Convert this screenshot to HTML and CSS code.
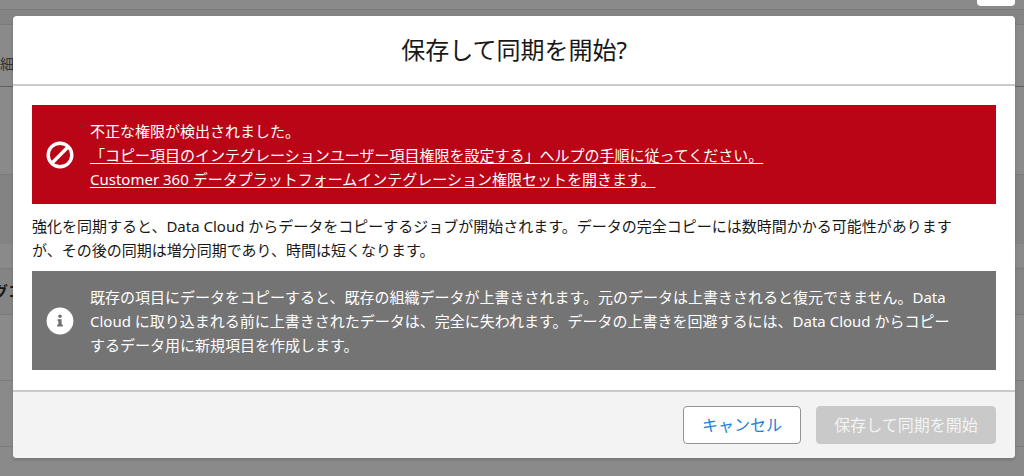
FILE: index.html
```
<!DOCTYPE html>
<html lang="ja">
<head>
<meta charset="utf-8">
<meta name="viewport" content="width=device-width, initial-scale=1">
<title>保存して同期を開始</title>
<link rel="stylesheet" href="styles.css">
</head>
<body>
<div class="stage">
  <div class="page" aria-hidden="true">
    <div class="row row-toolbar"><span class="page-button"></span></div>
    <div class="row row-gap"></div>
    <div class="row row-tabs">細</div>
    <div class="row row-panel"></div>
    <div class="row row-band"></div>
    <div class="row row-space"></div>
    <div class="row row-head">グコ</div>
    <div class="row row-line"></div>
    <div class="row row-line"></div>
    <div class="row row-rest"></div>
  </div>
  <section class="dialog" role="dialog" aria-modal="true" aria-labelledby="dialog-title">
    <header class="dialog-header">
      <h1 class="dialog-title" id="dialog-title">保存して同期を開始?</h1>
    </header>
    <div class="dialog-body">
      <div class="notice notice-error">
        <svg class="notice-icon" viewBox="0 0 28 28" aria-hidden="true">
          <circle cx="14" cy="14" r="11.8" fill="none" stroke="#fff" stroke-width="3.4"/>
          <path d="M6.3 21.7 21.7 6.3" stroke="#fff" stroke-width="3.4"/>
        </svg>
        <div class="notice-text">
          <div>不正な権限が検出されました。</div>
          <div><a class="notice-link" href="#help">「コピー項目のインテグレーションユーザー項目権限を設定する」ヘルプの手順に従ってください。</a></div>
          <div><a class="notice-link" href="#permissions">Customer 360 データプラットフォームインテグレーション権限セットを開きます。</a></div>
        </div>
      </div>
      <p class="description">強化を同期すると、Data Cloud からデータをコピーするジョブが開始されます。データの完全コピーには数時間かかる可能性があります<br>が、その後の同期は増分同期であり、時間は短くなります。</p>
      <div class="notice notice-info">
        <svg class="notice-icon" viewBox="0 0 28 28" aria-hidden="true">
          <circle cx="14" cy="14" r="13.4" fill="#fff"/>
          <circle cx="14" cy="9.2" r="1.7" fill="#706e6b"/>
          <path d="M11.6 12.2h4v5.4h1.2v1.8h-5.6v-1.8h1.2V14h-.8z" fill="#706e6b"/>
        </svg>
        <div class="notice-text">既存の項目にデータをコピーすると、既存の組織データが上書きされます。元のデータは上書きされると復元できません。Data<br>Cloud に取り込まれる前に上書きされたデータは、完全に失われます。データの上書きを回避するには、Data Cloud からコピー<br>するデータ用に新規項目を作成します。</div>
      </div>
    </div>
    <footer class="dialog-footer">
      <button class="button button-cancel" type="button">キャンセル</button>
      <button class="button button-save" type="button" disabled>保存して同期を開始</button>
    </footer>
  </section>
</div>
</body>
</html>
```

FILE: styles.css
```
* {
  box-sizing: border-box;
}

body {
  margin: 0;
  color: #181818;
  background: #8a8a8a;
  font-family: "Noto Sans", "Noto Sans CJK JP", sans-serif;
  font-size: 15px;
  line-height: 24px;
}

.stage {
  display: grid;
  grid-template-columns: minmax(0, 1fr);
  min-height: 100vh;
}

.page,
.dialog {
  grid-area: 1 / 1;
}

.page {
  display: flex;
  flex-direction: column;
  overflow: hidden;
}

.row {
  border-bottom: 1px solid #7b7b7b;
}

.row-toolbar {
  display: flex;
  justify-content: flex-end;
  height: 10px;
  padding-right: 9px;
}

.page-button {
  width: 38px;
  height: 6px;
  border-radius: 0 0 4px 4px;
  background: #fff;
}

.row-gap {
  height: 15px;
  background: #848484;
}

.row-tabs {
  height: 62px;
  padding-top: 27px;
  border-color: #5f5f5f;
  color: #333;
  font-size: 14px;
}

.row-panel {
  height: 88px;
}

.row-band {
  height: 69px;
  border: 0;
  background: #838383;
}

.row-space {
  height: 25px;
}

.row-head {
  height: 46px;
  padding-top: 10px;
  background: #848484;
  font-weight: 700;
  text-indent: -7px;
}

.row-line {
  height: 66px;
}

.row-rest {
  flex: 1;
  border: 0;
}

.dialog {
  align-self: start;
  margin: 16px 9px 18px 13px;
  overflow: hidden;
  border-radius: 4px;
  background: #fff;
  box-shadow: 0 2px 3px rgba(0, 0, 0, 0.16);
}

.dialog-header {
  padding: 16px;
  border-bottom: 2px solid #cacaca;
}

.dialog-title {
  margin: 0;
  font-size: 24px;
  font-weight: 400;
  line-height: 36px;
  text-align: center;
}

.dialog-body {
  padding: 19px 19px 20px;
}

.notice {
  display: flex;
  align-items: center;
  gap: 16px;
  padding: 14px 14px 13px;
  color: #fff;
}

.notice-error {
  background: #ba0517;
}

.notice-info {
  background: #747474;
}

.notice-icon {
  flex: none;
  width: 28px;
  height: 28px;
}

.notice-text {
  min-width: 0;
}

.notice-link {
  color: inherit;
  text-decoration: underline;
  text-decoration-skip-ink: none;
  text-underline-offset: 2px;
}

.description {
  margin: 10px 0 9px;
}

.dialog-footer {
  display: flex;
  justify-content: flex-end;
  gap: 15px;
  padding: 14px 19px;
  border-top: 2px solid #cacaca;
  background: #f3f3f3;
}

.button {
  height: 38px;
  padding: 0 16px;
  border: 1px solid #939393;
  border-radius: 4px;
  font: inherit;
  font-size: 16px;
}

.button-cancel {
  min-width: 118px;
  background: #fff;
  color: #1b7fdb;
}

.button-save {
  min-width: 180px;
  border-color: #c9c9c9;
  background: #c9c9c9;
  color: #f3f3f3;
}
```
